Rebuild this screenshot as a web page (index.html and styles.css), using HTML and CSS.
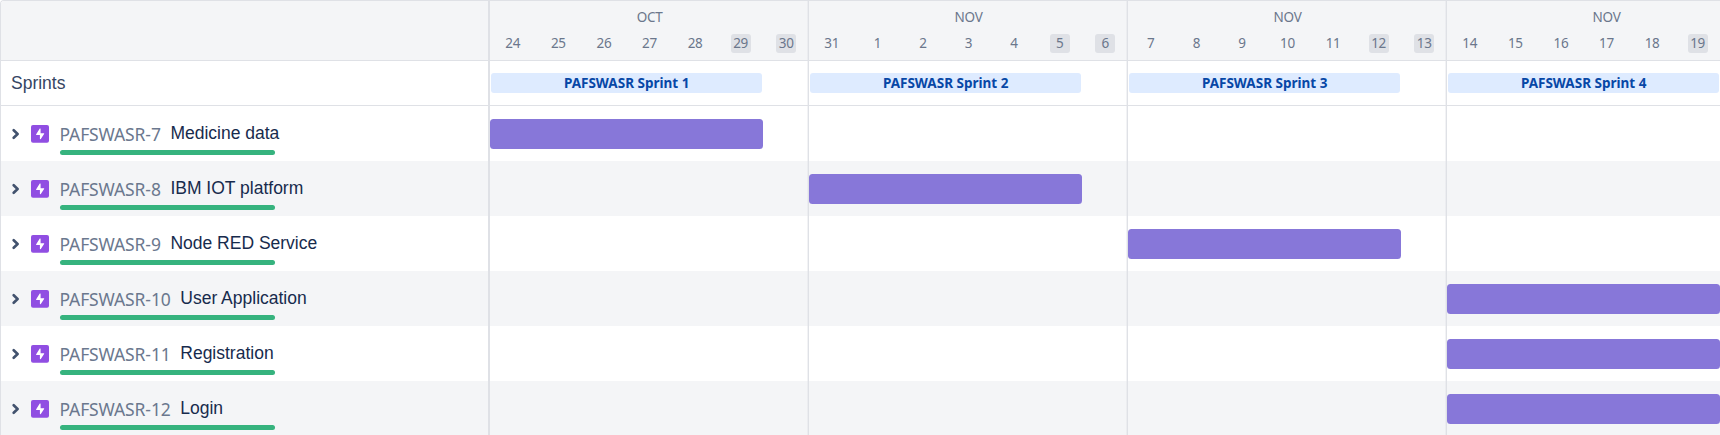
FILE: index.html
```
<!DOCTYPE html>
<html lang="en">
<head>
<meta charset="utf-8">
<title>Roadmap</title>
<link rel="stylesheet" href="styles.css">
</head>
<body>
<svg class="sprite" width="0" height="0">
  <symbol id="chevron" viewBox="0 0 8 12"><path d="M1.7 2.2 5.6 6 1.7 9.8" fill="none" stroke="#42526e" stroke-width="2.6" stroke-linecap="round" stroke-linejoin="round"/></symbol>
  <symbol id="epic" viewBox="0 0 18 18"><rect width="18" height="17.8" rx="2" fill="#904ee2"/><path d="M9.6 3.9v4.3h3.1c.5 0 .6.4.4.7l-3.3 5c-.3.4-.9.3-.9-.2V10H5.6c-.5 0-.7-.4-.4-.8l3.4-5.5c.3-.4 1-.3 1 .2z" fill="#fff"/></symbol>
</svg>
<div class="roadmap">
  <div class="issues">
    <div class="head"></div>
    <div class="sprints-label">Sprints</div>
    <div id="issue-rows"></div>
  </div>
  <div class="timeline" id="timeline"></div>
</div>
<script src="app.js"></script>
</body>
</html>
```
FILE: app.js
```
const issues = [
  ['PAFSWASR-7', 'Medicine data', 0],
  ['PAFSWASR-8', 'IBM IOT platform', 1],
  ['PAFSWASR-9', 'Node RED Service', 2],
  ['PAFSWASR-10', 'User Application', 3],
  ['PAFSWASR-11', 'Registration', 3],
  ['PAFSWASR-12', 'Login', 3]
];
const weeks = [
  ['OCT', [24, 25, 26, 27, 28, 29, 30]],
  ['NOV', [31, 1, 2, 3, 4, 5, 6]],
  ['NOV', [7, 8, 9, 10, 11, 12, 13]],
  ['NOV', [14, 15, 16, 17, 18, 19]]
];

document.getElementById('issue-rows').innerHTML = issues.map(([key, title]) => `
  <div class="issue">
    <svg class="chevron"><use href="#chevron"/></svg>
    <svg class="epic"><use href="#epic"/></svg>
    <div class="summary">
      <div class="text"><span class="key">${key}</span><span class="title">${title}</span></div>
      <div class="progress"></div>
    </div>
  </div>`).join('');

document.getElementById('timeline').innerHTML = weeks.map(([month, days], w) => `
  <div class="week">
    <div class="head">
      <div class="month">${month}</div>
      <div class="days">${days.map((d, i) => `<div class="day"><span class="${i > 4 ? 'weekend' : 'weekday'}">${d}</span></div>`).join('')}</div>
    </div>
    <div class="sprint-cell"><div class="sprint">PAFSWASR Sprint ${w + 1}</div></div>
    ${issues.map(issue => `<div class="cell">${issue[2] === w ? '<div class="bar"></div>' : ''}</div>`).join('')}
  </div>`).join('');
```
FILE: styles.css
```
* { box-sizing: border-box; }
body { margin: 0; background: #fff; overflow: hidden; }
.sprite { display: none; }
.roadmap {
  display: flex;
  width: 1720px;
  height: 435px;
  overflow: hidden;
  border-top: 1px solid #dfe1e6;
  border-left: 1px solid #dfe1e6;
  border-top-left-radius: 4px;
}
.issues {
  flex: 0 0 489px;
  border-right: 2px solid #dfe1e6;
  font-family: "Liberation Sans", Arial, sans-serif;
  font-size: 17.5px;
}
.head {
  height: 60px;
  background: #f4f5f7;
  border-bottom: 1px solid #dfe1e6;
}
.sprints-label {
  height: 45px;
  padding-left: 10px;
  border-bottom: 1px solid #dfe1e6;
  line-height: 44px;
  color: #344563;
}
.issue { display: flex; height: 55px; padding-left: 11px; }
.issue:nth-child(even), .cell:nth-child(even) { background: #f4f5f7; }
.chevron { width: 8px; height: 12px; margin-top: 22px; }
.epic { width: 18px; height: 18px; margin: 19px 0 0 11px; }
.summary { margin-left: 11px; }
.text { display: flex; height: 44px; white-space: nowrap; }
.key {
  font-family: "Noto Sans", sans-serif;
  font-weight: 400;
  line-height: 24px;
  margin-top: 16px;
  margin-left: -0.5px;
  letter-spacing: -0.12px;
  color: #6b788e;
}
.title { margin: 15px 0 0 9.6px; line-height: 24px; color: #172b4d; }
.progress { width: 215px; height: 5px; border-radius: 3px; background: #36b37e; }
.timeline { display: flex; font-family: "Noto Sans", sans-serif; }
.week { flex: 0 0 319px; position: relative; }
.week::after {
  content: "";
  position: absolute;
  top: 0;
  right: 0;
  width: 2px;
  height: 435px;
  background: linear-gradient(to right, rgba(223, 225, 230, 0.4) 1px, #dfe1e6 1px);
}
.month { height: 27px; padding-top: 5px; line-height: 22px; text-align: center; font-size: 13.5px; letter-spacing: -0.3px; color: #6b778c; }
.days { display: grid; grid-template-columns: repeat(7, 1fr); padding-top: 6px; }
.day { display: flex; justify-content: center; }
.day span { width: 20px; height: 19px; line-height: 19px; border-radius: 3px; text-align: center; font-size: 13.5px; letter-spacing: -0.3px; color: #6b778c; }
.day .weekend { background: #dfe1e6; }
.sprint-cell { height: 45px; padding: 12px 0 0 1.4px; border-bottom: 1px solid #dfe1e6; }
.sprint {
  width: 270.6px;
  height: 20px;
  border-radius: 3px;
  background: #deebff;
  line-height: 20px;
  text-align: center;
  font-size: 13.5px;
  font-weight: 700;
  color: #0747a6;
}
.cell { height: 55px; padding-top: 13px; }
.cell:nth-child(odd) { background: #fff; }
.bar { width: 273px; height: 29.5px; border-radius: 3.5px; background: #8777d9; }
```
